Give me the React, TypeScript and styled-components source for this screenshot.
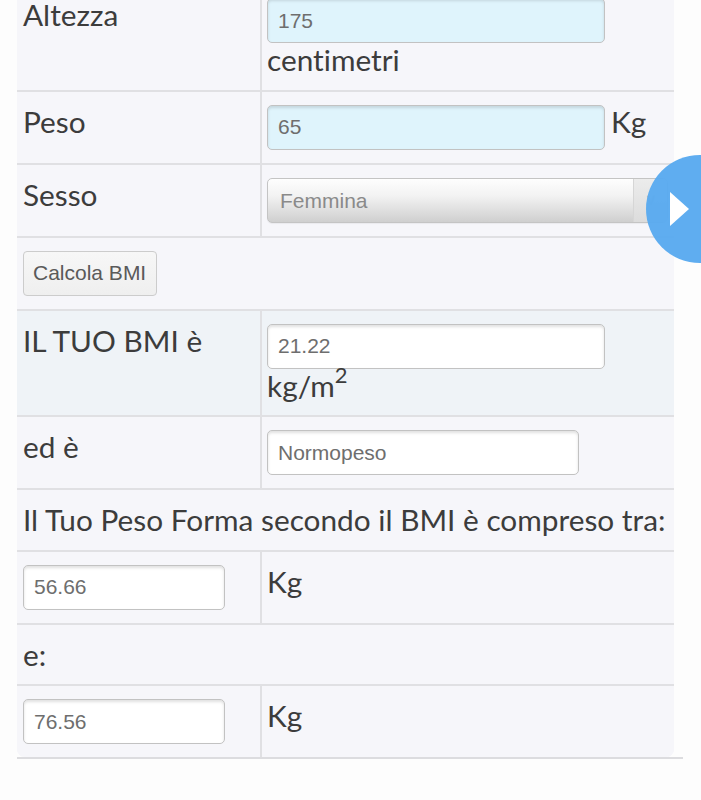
import React from "react";
import styled, { createGlobalStyle } from "styled-components";

const GlobalStyle = createGlobalStyle`
  html, body { margin: 0; padding: 0; background: #fdfdfd; }
  body {
    font-family: Lato, "Open Sans", sans-serif;
    color: #3c3c3c;
    overflow: hidden;
    font-variant-ligatures: none;
  }
  * { box-sizing: border-box; }
`;

const Page = styled.div`
  margin-top: -15px;
  padding-left: 17px;
`;

const Frame = styled.div`
  width: 666px;
  border-bottom: 2px solid #dcdcdf;
`;

const Table = styled.div`
  width: 657px;
  background: #f6f6fa;
  border-radius: 0 0 8px 8px;
  overflow: hidden;
`;

const Row = styled.div<{ $full?: boolean; $tint?: boolean; $last?: boolean }>`
  display: grid;
  grid-template-columns: ${(p) => (p.$full ? "1fr" : "245px 1fr")};
  background: ${(p) => (p.$tint ? "#eff3f7" : "#f6f6fa")};
  border-bottom: ${(p) => (p.$last ? "none" : "2px solid #e0e0e3")};
`;

const LabelCell = styled.div<{ $divider?: boolean; $nowrap?: boolean }>`
  padding: 13px 6px;
  font-size: 29.8px;
  line-height: 33.5px;
  color: #3c3c3c;
  white-space: ${(p) => (p.$nowrap ? "nowrap" : "normal")};
  border-right: ${(p) => (p.$divider ? "2px solid #e0e0e3" : "none")};
`;

const ValueCell = styled.div`
  padding: 13px 6px 13px 5px;
  display: flex;
  flex-wrap: wrap;
  align-items: flex-start;
  column-gap: 6px;
  font-size: 29.8px;
  line-height: 33.5px;
  color: #3c3c3c;
`;

const Unit = styled.span`
  white-space: nowrap;
  sup {
    font-size: 22px;
    line-height: 0;
    position: relative;
    top: -3px;
  }
`;

const Field = styled.input<{ $w: number; $blue?: boolean }>`
  display: block;
  width: ${(p) => p.$w}px;
  height: 45px;
  margin: 0;
  padding: 0 10px;
  border: 1px solid #c2c2c2;
  border-radius: 5px;
  background: ${(p) => (p.$blue ? "#dff4fc" : "#ffffff")};
  box-shadow: inset 0 2px 3px rgba(0, 0, 0, 0.12);
  font-family: "Liberation Sans", Arial, sans-serif;
  font-size: 21px;
  color: #6e6e6e;
  outline: none;
`;

const SelectBox = styled.div`
  width: 401px;
  height: 45px;
  display: flex;
  border: 1px solid #c4c4c4;
  border-radius: 5px;
  overflow: hidden;
  background: linear-gradient(#fefefe, #f2f2f2 40%, #cfcfcf);
  box-shadow: 0 1px 1px rgba(0, 0, 0, 0.05);
`;

const SelectText = styled.span`
  flex: 1;
  padding-left: 12px;
  font-family: "Liberation Sans", Arial, sans-serif;
  font-size: 21px;
  line-height: 43px;
  color: #8a8a8a;
`;

const SelectArrow = styled.span`
  width: 34px;
  display: flex;
  align-items: center;
  justify-content: center;
  border-left: 1px solid #d6d6d6;
  background: linear-gradient(#ececec, #dcdcdc);
  color: #b0b0b0;
  font-family: "Liberation Sans", Arial, sans-serif;
  font-size: 16px;
`;

const Button = styled.button`
  height: 45px;
  margin: 0;
  padding: 0 10px 0 9px;
  border: 1px solid #cccccc;
  border-radius: 4px;
  background: linear-gradient(#f7f7f7, #efefef);
  font-family: "Liberation Sans", Arial, sans-serif;
  font-size: 21px;
  color: #5a5a5a;
`;

const Fab = styled.div`
  position: fixed;
  left: 646px;
  top: 155px;
  width: 108px;
  height: 108px;
  border-radius: 50%;
  background: #5aabf0;
  opacity: 0.97;
  display: flex;
  align-items: center;
  padding-left: 24px;
`;

export default function App() {
  return (
    <>
      <GlobalStyle />
      <Page>
        <Frame>
          <Table>
            <Row>
              <LabelCell $divider>Altezza</LabelCell>
              <ValueCell>
                <Field $w={338} $blue readOnly value="175" />
                <Unit>centimetri</Unit>
              </ValueCell>
            </Row>
            <Row>
              <LabelCell $divider>Peso</LabelCell>
              <ValueCell>
                <Field $w={338} $blue readOnly value="65" />
                <Unit>Kg</Unit>
              </ValueCell>
            </Row>
            <Row>
              <LabelCell $divider>Sesso</LabelCell>
              <ValueCell>
                <SelectBox>
                  <SelectText>Femmina</SelectText>
                  <SelectArrow>∨</SelectArrow>
                </SelectBox>
              </ValueCell>
            </Row>
            <Row $full>
              <ValueCell style={{ paddingLeft: 6 }}>
                <Button>Calcola BMI</Button>
              </ValueCell>
            </Row>
            <Row $tint>
              <LabelCell $divider>IL TUO BMI è</LabelCell>
              <ValueCell>
                <Field $w={338} readOnly value="21.22" />
                <Unit>
                  kg/m<sup>2</sup>
                </Unit>
              </ValueCell>
            </Row>
            <Row>
              <LabelCell $divider>ed è</LabelCell>
              <ValueCell>
                <Field $w={312} readOnly value="Normopeso" />
              </ValueCell>
            </Row>
            <Row $full>
              <LabelCell $nowrap>Il Tuo Peso Forma secondo il BMI è compreso tra:</LabelCell>
            </Row>
            <Row>
              <LabelCell $divider>
                <Field $w={202} readOnly value="56.66" />
              </LabelCell>
              <ValueCell>
                <Unit>Kg</Unit>
              </ValueCell>
            </Row>
            <Row $full>
              <LabelCell>e:</LabelCell>
            </Row>
            <Row $last>
              <LabelCell $divider>
                <Field $w={202} readOnly value="76.56" />
              </LabelCell>
              <ValueCell>
                <Unit>Kg</Unit>
              </ValueCell>
            </Row>
          </Table>
        </Frame>
      </Page>
      <Fab>
        <svg width="20" height="34" viewBox="0 0 20 34">
          <polygon points="0,0 19,17 0,34" fill="#ffffff" />
        </svg>
      </Fab>
    </>
  );
}
